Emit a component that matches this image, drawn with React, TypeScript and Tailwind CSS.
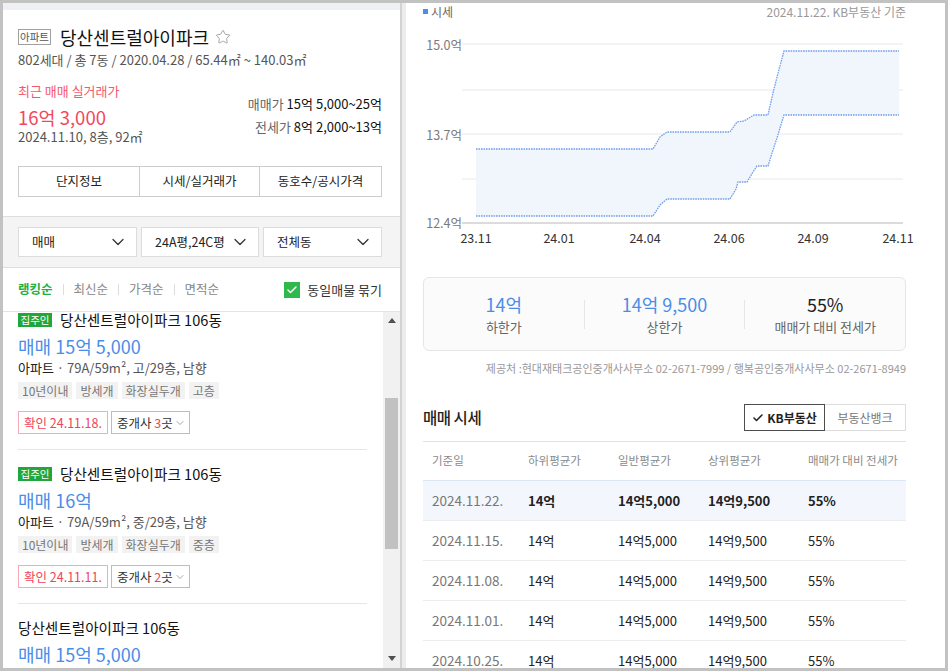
import { Star, ChevronDown, Check } from "lucide-react";

const upper: [number, number][] = [
  [476, 149], [653, 149], [660, 137], [667, 132], [730, 132], [737, 122], [744, 121],
  [754, 115], [768, 115], [773, 93], [777, 77], [784, 51], [899, 51],
];
const lower: [number, number][] = [
  [476, 216], [653, 216], [660, 205], [667, 199], [730, 199], [736, 189], [738, 182],
  [747, 182], [753, 172], [757, 166], [768, 166], [773, 150], [777, 138], [784, 115], [899, 115],
];

const pts = (a: [number, number][]) => a.map((p) => p.join(",")).join(" ");

function Chart() {
  const fill = pts([...upper, ...[...lower].reverse()]);
  return (
    <svg
      viewBox="423 20 483 230"
      width={483}
      height={230}
      className="block shrink-0 overflow-visible"
    >
      {[44, 90, 134, 179].map((y) => (
        <line key={y} x1={462} x2={903} y1={y} y2={y} stroke="#e8e8e8" strokeWidth={1} />
      ))}
      <polygon points={fill} fill="#f1f6fd" />
      <polyline points={pts(upper)} fill="none" stroke="#6f9fec" strokeWidth={1.3} strokeDasharray="1.6 0.9" />
      <polyline points={pts(lower)} fill="none" stroke="#6f9fec" strokeWidth={1.3} strokeDasharray="1.6 0.9" />
      <line x1={462} x2={903} y1={223} y2={223} stroke="#b8b8b8" strokeWidth={1} />
      {[
        ["15.0억", 44],
        ["13.7억", 134],
        ["12.4억", 222],
      ].map(([t, y]) => (
        <text key={t as string} x={462} y={y as number} textAnchor="end" dominantBaseline="central" fontSize={12.5} fill="#7a7a7a">
          {t}
        </text>
      ))}
      {[
        ["23.11", 476],
        ["24.01", 559],
        ["24.04", 645],
        ["24.06", 729],
        ["24.09", 813],
        ["24.11", 898],
      ].map(([t, x]) => (
        <text key={t as string} x={x as number} y={237} textAnchor="middle" dominantBaseline="central" fontSize={12.5} fill="#333">
          {t}
        </text>
      ))}
    </svg>
  );
}

type Item = {
  badge: boolean;
  price: string;
  floor: string;
  tags: string[];
  date: string;
  brokers: number;
};

const items: Item[] = [
  { badge: true, price: "매매 15억 5,000", floor: "고/29층", tags: ["10년이내", "방세개", "화장실두개", "고층"], date: "24.11.18.", brokers: 3 },
  { badge: true, price: "매매 16억", floor: "중/29층", tags: ["10년이내", "방세개", "화장실두개", "중층"], date: "24.11.11.", brokers: 2 },
  { badge: false, price: "매매 15억 5,000", floor: "고/29층", tags: ["10년이내", "방세개", "화장실두개", "고층"], date: "24.11.08.", brokers: 2 },
];

function Listing({ it }: { it: Item }) {
  return (
    <div className="ml-[15px] mr-[16px] pt-[15px] pb-[15px] border-b border-[#e6e6e6]">
      <div className="flex items-center h-[18px]">
        {it.badge && (
          <span className="mr-[8px] w-[34px] h-[14px] bg-[#21a63c] text-white text-[10.5px] leading-[14px] text-center">집주인</span>
        )}
        <span className="text-[14.6px] leading-[18px] text-[#111]">당산센트럴아이파크 106동</span>
      </div>
      <div className="mt-[6px] h-[22px] leading-[22px] text-[18px] text-[#4a8de8]">{it.price}</div>
      <div className="mt-[2px] h-[18px] leading-[18px] text-[13px] text-[#555]">
        <span className="text-[#222]">아파트</span> · 79A/59m², {it.floor}, 남향
      </div>
      <div className="mt-[5px] flex gap-[4px]">
        {it.tags.map((t) => (
          <span key={t} className="h-[17px] px-[4px] bg-[#f2f2f2] text-[12px] leading-[17px] text-[#777]">
            {t}
          </span>
        ))}
      </div>
      <div className="mt-[12px] flex gap-[3px]">
        <span className="h-[23px] px-[5px] border border-[#f7aab6] text-[12.5px] leading-[21px] text-[#f0445b]">
          확인 {it.date}
        </span>
        <span className="h-[23px] pl-[5px] pr-[3px] border border-[#bdbdbd] text-[12.5px] leading-[21px] text-[#333] flex items-center">
          중개사&nbsp;<span className="text-[#f0445b]">{it.brokers}</span>곳
          <ChevronDown size={12} strokeWidth={1.5} color="#888" className="ml-[1px]" />
        </span>
      </div>
    </div>
  );
}

const rows = [
  "2024.11.22.",
  "2024.11.15.",
  "2024.11.08.",
  "2024.11.01.",
  "2024.10.25.",
  "2024.10.18.",
];

export default function App() {
  return (
    <div className="w-[948px] h-[671px] bg-[#c2c2c2] p-[3px] flex overflow-hidden font-['Noto_Sans_CJK_KR','Noto_Sans',sans-serif]">
      {/* Left panel */}
      <div className="w-[397px] h-full bg-white flex flex-col">
        <div className="h-[7px] shrink-0 bg-[#eff0f4]" />
        <div className="pl-[15px] pr-[18px] pt-[19px] shrink-0">
          <div className="flex items-center h-[16px]">
            <span className="w-[33px] h-[16px] border border-[#a0a0a0] text-[10.5px] leading-[14px] text-[#555] text-center">아파트</span>
            <span className="ml-[9px] text-[18px] leading-[22px] text-[#111]">당산센트럴아이파크</span>
            <Star className="ml-[6px]" size={16} strokeWidth={1.3} color="#999" />
          </div>
          <div className="mt-[6px] h-[18px] leading-[18px] text-[13px] text-[#555]">
            802세대 / 총 7동 / 2020.04.28 / 65.44㎡ ~ 140.03㎡
          </div>
          <div className="mt-[13px] flex justify-between">
            <div>
              <div className="h-[18px] leading-[18px] text-[13px] text-[#f5586d]">최근 매매 실거래가</div>
              <div className="mt-[7px] h-[20px] leading-[20px] text-[18.5px] text-[#f2475e]">16억 3,000</div>
              <div className="mt-[1px] h-[18px] leading-[18px] text-[13px] text-[#555]">2024.11.10, 8층, 92㎡</div>
            </div>
            <div className="pt-[13px] flex flex-col items-end gap-[5px] text-[13px]">
              <div className="h-[18px] leading-[18px]">
                <span className="text-[#666]">매매가</span> <span className="text-[#111]">15억 5,000~25억</span>
              </div>
              <div className="h-[18px] leading-[18px]">
                <span className="text-[#666]">전세가</span> <span className="text-[#111]">8억 2,000~13억</span>
              </div>
            </div>
          </div>
          <div className="mt-[20px] grid grid-cols-[120px_120px_1fr] h-[31px] border border-[#cccccc] text-[12.5px] text-[#222]">
            <div className="flex items-center justify-center">단지정보</div>
            <div className="flex items-center justify-center border-l border-[#cccccc]">시세/실거래가</div>
            <div className="flex items-center justify-center border-l border-[#cccccc]">동호수/공시가격</div>
          </div>
          <div className="h-[19px]" />
        </div>
        <div className="shrink-0 border-t border-b border-[#dedede] bg-[#f4f4f4] py-[10px] pl-[15px] pr-[18px] grid grid-cols-[119px_118px_1fr] gap-[4px] text-[12.5px] text-[#222]">
          {["매매", "24A평,24C평", "전체동"].map((t) => (
            <div key={t} className="h-[30px] bg-white border border-[#dcdcdc] pl-[13px] pr-[8px] flex items-center justify-between">
              <span>{t}</span>
              <ChevronDown size={20} strokeWidth={1.5} color="#333" />
            </div>
          ))}
        </div>
        <div className="shrink-0 h-[44px] pl-[15px] pr-[18px] flex items-center justify-between border-b border-[#e4e4e4] text-[12.5px]">
          <div className="flex items-center">
            <span className="text-[#23b03f] font-bold">랭킹순</span>
            <span className="mx-[10px] w-px h-[11px] bg-[#dddddd]" />
            <span className="text-[#888]">최신순</span>
            <span className="mx-[10px] w-px h-[11px] bg-[#dddddd]" />
            <span className="text-[#888]">가격순</span>
            <span className="mx-[10px] w-px h-[11px] bg-[#dddddd]" />
            <span className="text-[#888]">면적순</span>
          </div>
          <div className="flex items-center">
            <span className="w-[16px] h-[16px] bg-[#2fb84b] flex items-center justify-center">
              <Check size={12} strokeWidth={3} color="#fff" />
            </span>
            <span className="ml-[7px] text-[13px] text-[#333]">동일매물 묶기</span>
          </div>
        </div>
        <div className="flex-1 min-h-0 flex overflow-hidden">
          <div className="flex-1 overflow-hidden">
            <div className="-mt-[16px]">
              {items.map((it, i) => (
                <Listing key={i} it={it} />
              ))}
            </div>
          </div>
          <div className="w-[17px] bg-[#f1f1f1] flex flex-col">
            <div className="h-[17px] shrink-0 flex items-center justify-center">
              <svg width="8" height="5" viewBox="0 0 8 5">
                <polygon points="4,0 8,5 0,5" fill="#505050" />
              </svg>
            </div>
            <div className="shrink-0 mt-[69px] mx-[2px] h-[151px] bg-[#c1c1c1]" />
            <div className="flex-1" />
            <div className="h-[12px] shrink-0 flex items-start justify-center">
              <svg width="8" height="5" viewBox="0 0 8 5">
                <polygon points="0,0 8,0 4,5" fill="#505050" />
              </svg>
            </div>
          </div>
        </div>
      </div>
      <div className="w-[2px] bg-[#d3d3d3]" />
      <div className="w-[4px] bg-[#ececec]" />
      {/* Right panel */}
      <div className="flex-1 h-full bg-white pl-[17px] pr-[39px] flex flex-col overflow-hidden">
        <div className="shrink-0 h-[17px] flex items-center justify-between text-[12px]">
          <div className="flex items-center">
            <span className="w-[5px] h-[5px] bg-[#4a8fe8]" />
            <span className="ml-[3px] text-[#666]">시세</span>
          </div>
          <span className="text-[#999]">2024.11.22. KB부동산 기준</span>
        </div>
        <Chart />
        <div className="shrink-0 mt-[27px] h-[74px] rounded-[6px] border border-[#e6e6e6] bg-[#fbfbfb] flex items-center">
          <div className="flex-1 flex flex-col items-center">
            <div className="h-[22px] leading-[22px] text-[18px] text-[#4a8de8]">14억</div>
            <div className="mt-[3px] h-[18px] leading-[18px] text-[13px] text-[#666]">하한가</div>
          </div>
          <div className="w-px h-[29px] bg-[#e6e6e6]" />
          <div className="flex-1 flex flex-col items-center">
            <div className="h-[22px] leading-[22px] text-[18px] text-[#4a8de8]">14억 9,500</div>
            <div className="mt-[3px] h-[18px] leading-[18px] text-[13px] text-[#666]">상한가</div>
          </div>
          <div className="w-px h-[29px] bg-[#e6e6e6]" />
          <div className="flex-1 flex flex-col items-center">
            <div className="h-[22px] leading-[22px] text-[18px] text-[#222]">55%</div>
            <div className="mt-[3px] h-[18px] leading-[18px] text-[13px] text-[#666]">매매가 대비 전세가</div>
          </div>
        </div>
        <div className="shrink-0 mt-[9px] h-[16px] leading-[16px] text-right text-[11px] text-[#999] whitespace-nowrap">
          제공처 :현대재태크공인중개사사무소 02-2671-7999 / 행복공인중개사사무소 02-2671-8949
        </div>
        <div className="shrink-0 mt-[28px] h-[27px] flex items-center justify-between">
          <span className="text-[15.5px] text-[#222] font-medium tracking-[-0.03em]">매매 시세</span>
          <div className="flex h-[27px] text-[12px]">
            <div className="w-[81px] border border-[#4d4d4d] flex items-center justify-center font-bold text-[#222]">
              <Check size={12} strokeWidth={3.2} className="mr-[3px]" />
              KB부동산
            </div>
            <div className="w-[81px] border border-l-0 border-[#dddddd] flex items-center justify-center text-[#777]">
              부동산뱅크
            </div>
          </div>
        </div>
        <div className="shrink-0 mt-[10px] border-t border-[#e2e2e2]">
          <div className="h-[38px] pl-[9px] grid grid-cols-[96px_90px_90px_100px_1fr] items-center text-[11.5px] text-[#8a8a8a]">
            <span>기준일</span>
            <span>하위평균가</span>
            <span>일반평균가</span>
            <span>상위평균가</span>
            <span>매매가 대비 전세가</span>
          </div>
          {rows.map((d, i) => (
            <div
              key={d}
              className={
                i === 0
                  ? "h-[40px] pl-[9px] grid grid-cols-[96px_90px_90px_100px_1fr] items-center text-[13px] border-t border-[#dce7f6] bg-[#f3f7fd] font-bold text-[#222]"
                  : "h-[40px] pl-[9px] grid grid-cols-[96px_90px_90px_100px_1fr] items-center text-[13px] border-t border-[#ececec] text-[#222]"
              }
            >
              <span className="font-normal text-[#777] text-[13.5px]">{d}</span>
              <span>14억</span>
              <span>14억5,000</span>
              <span>14억9,500</span>
              <span>55%</span>
            </div>
          ))}
        </div>
      </div>
    </div>
  );
}
